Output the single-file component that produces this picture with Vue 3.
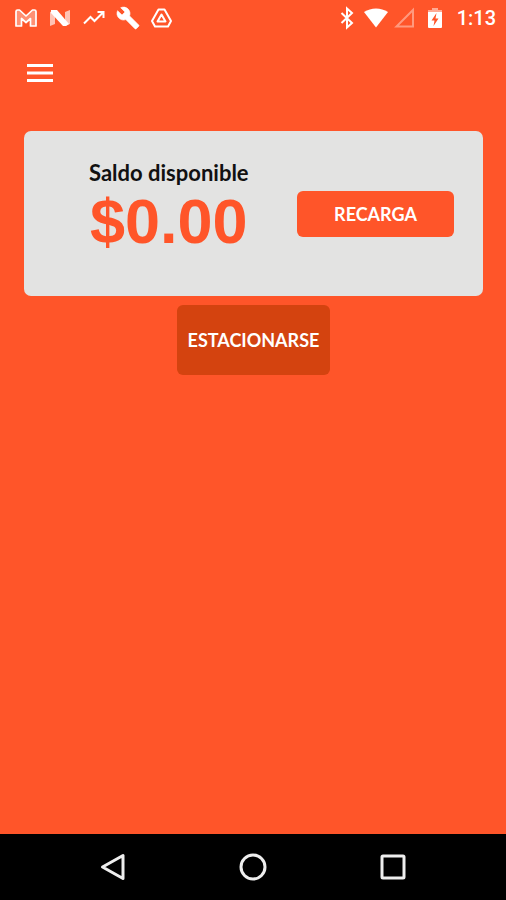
<script setup>
import { ref } from 'vue'

const balance = ref(0)
</script>

<template>
  <div class="screen">
    <div class="status">
      <div class="group notices">
        <svg viewBox="0 0 24 24" aria-hidden="true">
          <path d="M2 5.500Q2 4 3.600 4H5.500L12 10 18.500 4H20.500Q22 4 22 5.500V20H16.500V12.500L12 16.500 7.500 12.500V20H2Z" fill="#fff" fill-opacity=".35" stroke="#fff" stroke-width="1.700" stroke-linejoin="round" />
        </svg>
        <svg viewBox="0 0 24 24" aria-hidden="true">
          <path d="M2 6 7 4V18L2 20ZM17 6 22 4V18L17 20Z" fill="#fff" opacity=".65" />
          <path d="M3 4H9L21 18 18 20H15L3 7Z" fill="#fff" />
        </svg>
        <svg viewBox="0 0 24 24" aria-hidden="true">
          <path d="M2 17.500 8.500 11 12.500 15 20.500 7M15.500 6H21.500V12" fill="none" stroke="#fff" stroke-width="2" />
        </svg>
        <svg viewBox="0 0 24 24" aria-hidden="true">
          <path d="M22.700 19l-9.100-9.100c.9-2.300.4-5-1.500-6.900-2-2-5-2.400-7.400-1.300L9 6 6 9 1.600 4.700C.4 7.100.9 10.100 2.900 12.100c1.900 1.900 4.600 2.400 6.900 1.500l9.100 9.100c.4.4 1 .4 1.400 0l2.300-2.300c.5-.4.5-1.100.1-1.400z" fill="#fff" stroke="#fff" stroke-width=".6" />
        </svg>
        <svg viewBox="0 0 24 24" aria-hidden="true">
          <path d="M8.500 3.500H14.500L21 15 18 20.500H5L2 15Z" fill="none" stroke="#fff" stroke-width="2" stroke-linejoin="round" />
          <path d="M11.500 8.500 15.500 15.500H7.500Z" fill="none" stroke="#fff" stroke-width="2" stroke-linejoin="round" />
        </svg>
      </div>
      <div class="group system">
        <svg viewBox="0 0 24 24" aria-hidden="true">
          <path d="M6.500 7 17 17 12 21.500V2.500L17 7 6.500 17" fill="none" stroke="#fff" stroke-width="2" />
        </svg>
        <svg viewBox="0 0 24 24" aria-hidden="true">
          <path d="M0 6Q5.500 2.500 12 2.500T24 6L12 21.500Z" fill="#fff" />
        </svg>
        <svg viewBox="0 0 24 24" aria-hidden="true">
          <path d="M20 4V20.500H3.500Z" fill="none" stroke="#fff" stroke-opacity=".4" stroke-width="2" />
        </svg>
        <svg viewBox="0 0 24 24" aria-hidden="true">
          <path d="M10 2H16V4H20V7H6V4H10Z" fill="#fff" opacity=".5" />
          <path d="M6 6H20V21Q20 22 19 22H7Q6 22 6 21Z" fill="#fff" />
          <path d="M14.500 7 9.500 14.500H12.500L11.500 20 16.500 12.500H13.500Z" fill="#ff5529" />
        </svg>
        <time class="clock">1:13</time>
      </div>
    </div>

    <header class="bar">
      <button class="icon-button" type="button" aria-label="Menú">
        <svg viewBox="0 0 28 20" aria-hidden="true">
          <path d="M1 2.500H27M1 10H27M1 17.500H27" stroke="#fff" stroke-width="3" />
        </svg>
      </button>
    </header>

    <main class="content">
      <section class="card">
        <div class="balance">
          <h1 class="label">Saldo disponible</h1>
          <p class="amount">${{ balance.toFixed(2) }}</p>
        </div>
        <button class="recharge" type="button">RECARGA</button>
      </section>
      <button class="park" type="button">ESTACIONARSE</button>
    </main>

    <nav class="system-nav">
      <button type="button" aria-label="Atrás">
        <svg viewBox="0 0 28 28" aria-hidden="true"><path d="M24 2.500V25.500L3.500 14Z" /></svg>
      </button>
      <button type="button" aria-label="Inicio">
        <svg viewBox="0 0 28 28" aria-hidden="true"><circle cx="14" cy="14" r="12" /></svg>
      </button>
      <button type="button" aria-label="Recientes">
        <svg viewBox="0 0 28 28" aria-hidden="true"><rect x="3" y="3" width="22" height="22" rx="1" /></svg>
      </button>
    </nav>
  </div>
</template>

<style>
body {
  margin: 0;
}
</style>

<style scoped>
.screen {
  display: flex;
  flex-direction: column;
  min-height: 100vh;
  background: #ff5529;
  color: #fff;
  font-family: Lato, "Open Sans", sans-serif;
}

button {
  margin: 0;
  padding: 0;
  border: 0;
  background: none;
  color: inherit;
  font: inherit;
  cursor: pointer;
}

svg {
  display: block;
}

.status {
  display: flex;
  justify-content: space-between;
  align-items: center;
  height: 36px;
  padding: 0 10px 0 14px;
}

.group {
  display: flex;
  align-items: center;
}

.group svg {
  width: 24px;
  height: 24px;
}

.notices {
  gap: 10px;
}

.system {
  gap: 5px;
}

.clock {
  margin-left: 6px;
  font: 500 20px/24px Roboto, sans-serif;
}

.bar {
  display: flex;
  align-items: center;
  height: 74px;
  padding: 0 26px;
}

.icon-button svg {
  width: 28px;
  height: 20px;
}

.content {
  flex: 1;
  display: flex;
  flex-direction: column;
  align-items: center;
  gap: 9px;
  padding: 21px 23px 24px 24px;
}

.card {
  box-sizing: border-box;
  display: flex;
  justify-content: space-between;
  align-items: center;
  width: 100%;
  min-height: 165px;
  padding: 24px 29px 24px 65px;
  border-radius: 7px;
  background: #e3e3e2;
}

.balance {
  padding-bottom: 14px;
  text-align: center;
}

.label {
  margin: 0;
  color: #111;
  font-size: 22px;
  font-weight: 700;
  line-height: 28px;
}

.amount {
  margin: 0;
  color: #ff5529;
  font: 700 63px/68px "Liberation Sans", Arial, sans-serif;
}

.recharge,
.park {
  border-radius: 6px;
  font-size: 18px;
  font-weight: 700;
  line-height: 24px;
}

.recharge {
  width: 157px;
  height: 46px;
  background: #ff5529;
}

.park {
  height: 70px;
  padding: 0 11px;
  background: #d4430f;
}

.system-nav {
  display: flex;
  justify-content: center;
  align-items: center;
  gap: 112px;
  height: 66px;
  background: #000;
}

.system-nav svg {
  width: 28px;
  height: 28px;
  fill: none;
  stroke: #eee;
  stroke-width: 3;
  stroke-linejoin: round;
}
</style>
